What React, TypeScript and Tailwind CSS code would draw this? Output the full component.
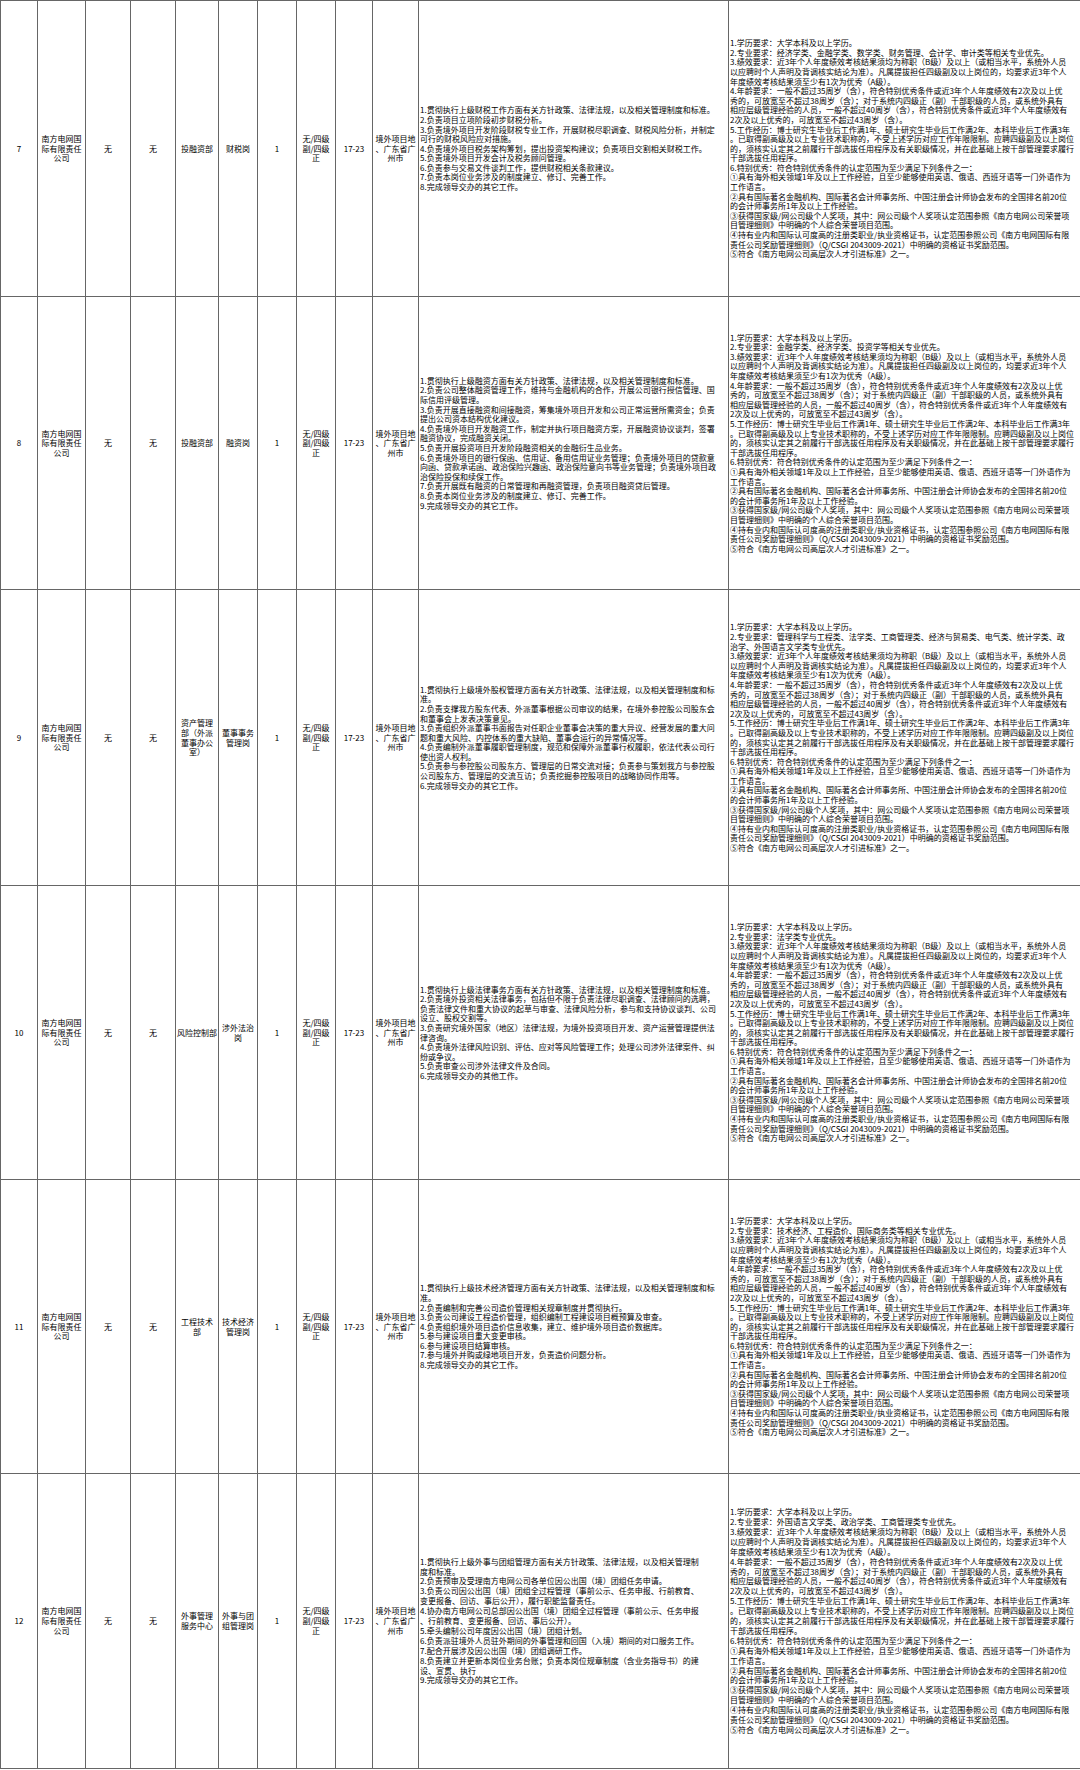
import type { ReactNode } from "react";

interface PostRow {
  no: string;
  dept: string[];
  post: string[];
  rowClass: string;
  duties: string[];
  major: string[];
}

const COMPANY = ["南方电网国", "际有限责任", "公司"];
const LEVEL = ["无/四级", "副/四级", "正"];
const PLACE = ["境外项目地", "、广东省广", "州市"];

const REQ_HEAD = ["1.学历要求：大学本科及以上学历。"];

const REQ_TAIL = [
  "3.绩效要求：近3年个人年度绩效考核结果须均为称职（B级）及以上（或相当水平，系统外人员",
  "以应聘时个人声明及背调核实结论为准）。凡属提拔担任四级副及以上岗位的，均要求近3年个人",
  "年度绩效考核结果须至少有1次为优秀（A级）。",
  "4.年龄要求：一般不超过35周岁（含），符合特别优秀条件或近3年个人年度绩效有2次及以上优",
  "秀的，可放宽至不超过38周岁（含）；对于系统内四级正（副）干部职级的人员，或系统外具有",
  "相应层级管理经验的人员，一般不超过40周岁（含），符合特别优秀条件或近3年个人年度绩效有",
  "2次及以上优秀的，可放宽至不超过43周岁（含）。",
  "5.工作经历：博士研究生毕业后工作满1年、硕士研究生毕业后工作满2年、本科毕业后工作满3年",
  "。已取得副高级及以上专业技术职称的，不受上述学历对应工作年限限制。应聘四级副及以上岗位",
  "的，须核实认定其之前履行干部选拔任用程序及有关职级情况，并在此基础上按干部管理要求履行",
  "干部选拔任用程序。",
  "6.特别优秀：符合特别优秀条件的认定范围为至少满足下列条件之一：",
  "①具有海外相关领域1年及以上工作经验，且至少能够使用英语、俄语、西班牙语等一门外语作为",
  "工作语言。",
  "②具有国际著名金融机构、国际著名会计师事务所、中国注册会计师协会发布的全国排名前20位",
  "的会计师事务所1年及以上工作经验。",
  "③获得国家级/网公司级个人奖项，其中：网公司级个人奖项认定范围参照《南方电网公司荣誉项",
  "目管理细则》中明确的个人综合荣誉项目范围。",
  "④持有业内和国际认可度高的注册类职业/执业资格证书，认定范围参照公司《南方电网国际有限",
  "责任公司奖励管理细则》（Q/CSGI 2043009-2021）中明确的资格证书奖励范围。",
  "⑤符合《南方电网公司高层次人才引进标准》之一。",
];

const ROWS: PostRow[] = [
  {
    no: "7",
    dept: ["投融资部"],
    post: ["财税岗"],
    rowClass: "h-[296px] leading-[9.6px]",
    duties: [
      "1.贯彻执行上级财税工作方面有关方针政策、法律法规，以及相关管理制度和标准。",
      "2.负责项目立项阶段初步财税分析。",
      "3.负责境外项目开发阶段财税专业工作，开展财税尽职调查、财税风险分析，并制定",
      "可行的财税风险应对措施。",
      "4.负责境外项目税务架构筹划，提出投资架构建议；负责项目交割相关财税工作。",
      "5.负责境外项目开发会计及税务顾问管理。",
      "6.负责参与交易文件谈判工作，提供财税相关条款建议。",
      "7.负责本岗位业务涉及的制度建立、修订、完善工作。",
      "8.完成领导交办的其它工作。",
    ],
    major: ["2.专业要求：经济学类、金融学类、数学类、财务管理、会计学、审计类等相关专业优先。"],
  },
  {
    no: "8",
    dept: ["投融资部"],
    post: ["融资岗"],
    rowClass: "h-[293px] leading-[9.6px]",
    duties: [
      "1.贯彻执行上级融资方面有关方针政策、法律法规，以及相关管理制度和标准。",
      "2.负责公司整体融资管理工作，维持与金融机构的合作，开展公司银行授信管理、国",
      "际信用评级管理。",
      "3.负责开展直接融资和间接融资，筹集境外项目开发和公司正常运营所需资金；负责",
      "提出公司资本结构优化建议。",
      "4.负责境外项目开发融资工作，制定并执行项目融资方案，开展融资协议谈判，签署",
      "融资协议，完成融资关闭。",
      "5.负责开展投资项目开发阶段融资相关的金融衍生品业务。",
      "6.负责境外项目的银行保函、信用证、备用信用证业务管理；负责境外项目的贷款意",
      "向函、贷款承诺函、政治保险兴趣函、政治保险意向书等业务管理；负责境外项目政",
      "治保险投保和续保工作。",
      "7.负责开展既有融资的日常管理和再融资管理，负责项目融资贷后管理。",
      "8.负责本岗位业务涉及的制度建立、修订、完善工作。",
      "9.完成领导交办的其它工作。",
    ],
    major: ["2.专业要求：金融学类、经济学类、投资学等相关专业优先。"],
  },
  {
    no: "9",
    dept: ["资产管理", "部（外派", "董事办公", "室）"],
    post: ["董事事务", "管理岗"],
    rowClass: "h-[296px] leading-[9.6px]",
    duties: [
      "1.贯彻执行上级境外股权管理方面有关方针政策、法律法规，以及相关管理制度和标",
      "准。",
      "2.负责支撑我方股东代表、外派董事根据公司审议的结果，在境外参控股公司股东会",
      "和董事会上发表决策意见。",
      "3.负责组织外派董事书面报告对任职企业董事会决策的重大异议、经营发展的重大问",
      "题和重大风险、内控体系的重大缺陷、董事会运行的异常情况等。",
      "4.负责编制外派董事履职管理制度，规范和保障外派董事行权履职，依法代表公司行",
      "使出资人权利。",
      "5.负责参与参控股公司股东方、管理层的日常交流对接；负责参与策划我方与参控股",
      "公司股东方、管理层的交流互访；负责挖掘参控股项目的战略协同作用等。",
      "6.完成领导交办的其它工作。",
    ],
    major: [
      "2.专业要求：管理科学与工程类、法学类、工商管理类、经济与贸易类、电气类、统计学类、政",
      "治学、外国语言文学类专业优先。",
    ],
  },
  {
    no: "10",
    dept: ["风险控制部"],
    post: ["涉外法治", "岗"],
    rowClass: "h-[294px] leading-[9.6px]",
    duties: [
      "1.贯彻执行上级法律事务方面有关方针政策、法律法规，以及相关管理制度和标准。",
      "2.负责境外投资相关法律事务，包括但不限于负责法律尽职调查、法律顾问的选聘，",
      "负责法律文件和重大协议的起草与审查、法律风险分析，参与和支持协议谈判、公司",
      "设立、股权交割等。",
      "3.负责研究境外国家（地区）法律法规，为境外投资项目开发、资产运营管理提供法",
      "律咨询。",
      "4.负责境外法律风险识别、评估、应对等风险管理工作；处理公司涉外法律案件、纠",
      "纷或争议。",
      "5.负责审查公司涉外法律文件及合同。",
      "6.完成领导交办的其他工作。",
    ],
    major: ["2.专业要求：法学类专业优先。"],
  },
  {
    no: "11",
    dept: ["工程技术", "部"],
    post: ["技术经济", "管理岗"],
    rowClass: "h-[294px] leading-[9.6px]",
    duties: [
      "1.贯彻执行上级技术经济管理方面有关方针政策、法律法规，以及相关管理制度和标",
      "准。",
      "2.负责编制和完善公司造价管理相关规章制度并贯彻执行。",
      "3.负责公司建设工程造价管理，组织编制工程建设项目概预算及审查。",
      "4.负责组织境外项目造价信息收集，建立、维护境外项目造价数据库。",
      "5.参与建设项目重大变更审核。",
      "6.参与建设项目结算审核。",
      "7.参与境外并购或绿地项目开发，负责造价问题分析。",
      "8.完成领导交办的其它工作。",
    ],
    major: ["2.专业要求：技术经济、工程造价、国际商务类等相关专业优先。"],
  },
  {
    no: "12",
    dept: ["外事管理", "服务中心"],
    post: ["外事与团", "组管理岗"],
    rowClass: "h-[295px] leading-[9.9px]",
    duties: [
      "1.贯彻执行上级外事与团组管理方面有关方针政策、法律法规，以及相关管理制",
      "度和标准。",
      "2.负责预审及受理南方电网公司各单位因公出国（境）团组任务申请。",
      "3.负责公司因公出国（境）团组全过程管理（事前公示、任务申报、行前教育、",
      "变更报备、回访、事后公开），履行职能监督责任。",
      "4.协办南方电网公司总部因公出国（境）团组全过程管理（事前公示、任务申报",
      "、行前教育、变更报备、回访、事后公开）。",
      "5.牵头编制公司年度因公出国（境）团组计划。",
      "6.负责派驻境外人员驻外期间的外事管理和回国（入境）期间的对口服务工作。",
      "7.配合开展涉及因公出国（境）团组调研工作。",
      "8.负责建立并更新本岗位业务台账；负责本岗位规章制度（含业务指导书）的建",
      "设、宣贯、执行",
      "9.完成领导交办的其它工作。",
    ],
    major: ["2.专业要求：外国语言文学类、政治学类、工商管理类专业优先。"],
  },
];

function Lines({ lines }: { lines: string[] }) {
  return (
    <>
      {lines.map((line, i) => (
        <div key={i} className="whitespace-nowrap">
          {line}
        </div>
      ))}
    </>
  );
}

function Cell({ children, wide = false }: { children: ReactNode; wide?: boolean }) {
  return (
    <td
      className={
        wide
          ? "overflow-hidden border border-[#666] pl-px text-left align-middle"
          : "overflow-hidden border border-[#666] text-center align-middle"
      }
    >
      {children}
    </td>
  );
}

export default function App() {
  return (
    <div className="min-h-[1770px] w-[1080px] bg-white text-[8px] text-black [font-family:'Noto_Sans_CJK_SC','Noto_Sans',sans-serif]">
      <table className="w-[1080px] table-fixed border-collapse">
        <colgroup>
          <col className="w-[37px]" />
          <col className="w-[48px]" />
          <col className="w-[45px]" />
          <col className="w-[45px]" />
          <col className="w-[43px]" />
          <col className="w-[39px]" />
          <col className="w-[39px]" />
          <col className="w-[39px]" />
          <col className="w-[37px]" />
          <col className="w-[46px]" />
          <col className="w-[310px]" />
          <col className="w-[352px]" />
        </colgroup>
        <tbody>
          {ROWS.map((row) => (
            <tr key={row.no} className={row.rowClass}>
              <Cell>{row.no}</Cell>
              <Cell>
                <Lines lines={COMPANY} />
              </Cell>
              <Cell>无</Cell>
              <Cell>无</Cell>
              <Cell>
                <Lines lines={row.dept} />
              </Cell>
              <Cell>
                <Lines lines={row.post} />
              </Cell>
              <Cell>1</Cell>
              <Cell>
                <Lines lines={LEVEL} />
              </Cell>
              <Cell>17-23</Cell>
              <Cell>
                <Lines lines={PLACE} />
              </Cell>
              <Cell wide>
                <Lines lines={row.duties} />
              </Cell>
              <Cell wide>
                <Lines lines={[...REQ_HEAD, ...row.major, ...REQ_TAIL]} />
              </Cell>
            </tr>
          ))}
        </tbody>
      </table>
    </div>
  );
}
